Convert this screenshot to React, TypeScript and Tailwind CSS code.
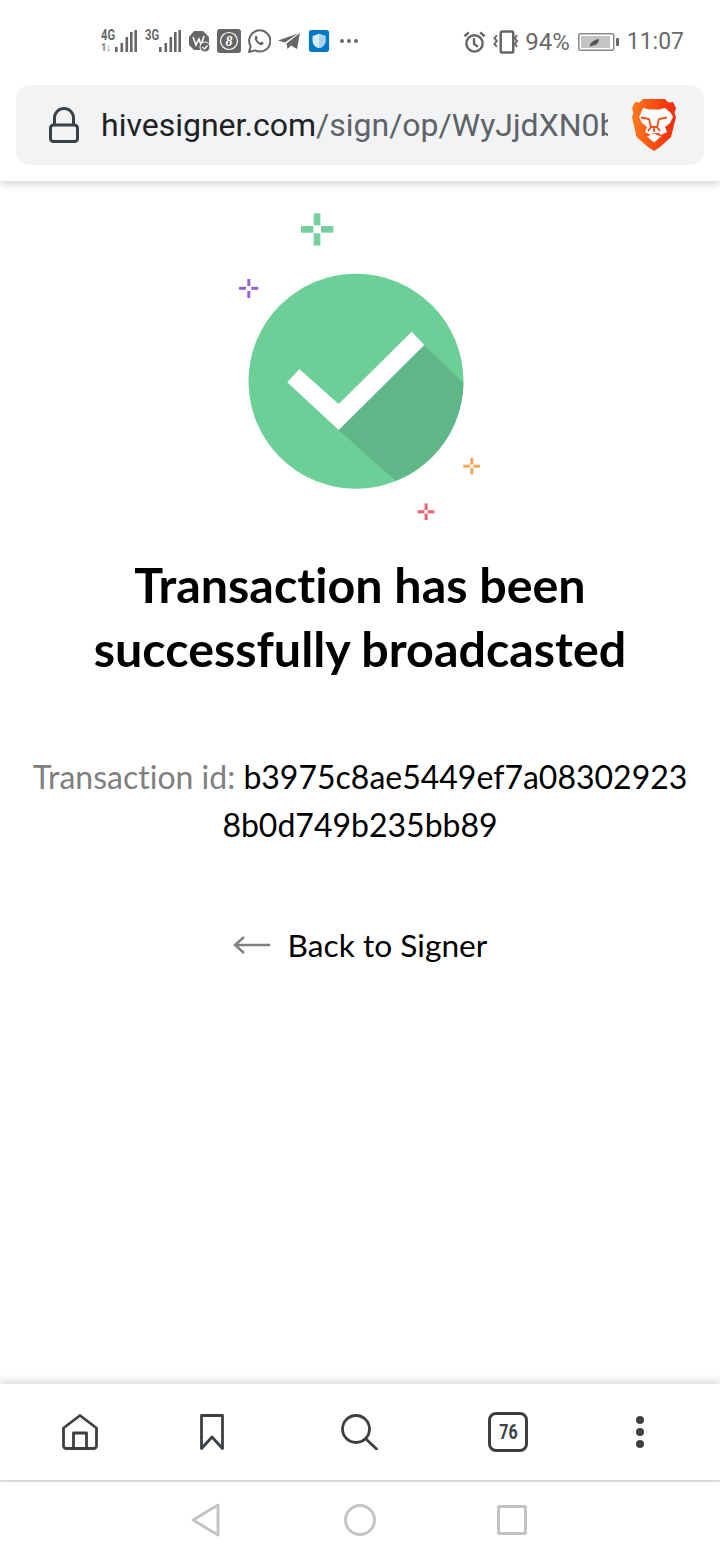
import React from "react";

const Signal = ({ label, second }: { label: string; second?: boolean }) => (
  <div className="relative h-[24px] w-[36px]">
    <span className="absolute left-0 top-[0px] origin-left scale-x-[0.8] font-['Roboto',sans-serif] text-[14px] leading-[12px] font-bold text-[#666]">
      {label}
    </span>
    {second && (
      <span className="absolute left-0 top-[13px] origin-left scale-x-[0.85] font-['Roboto',sans-serif] text-[11px] leading-[11px] font-bold text-[#777]">
        1↓
      </span>
    )}
    <svg viewBox="0 0 36 24" className="absolute inset-0 h-[24px] w-[36px]" fill="#666">
      <rect x="14" y="18" width="2.600" height="5" />
      <rect x="19.500" y="14" width="2.600" height="9" />
      <rect x="24.500" y="8" width="2.600" height="15" />
      <rect x="29" y="3" width="2.600" height="20" />
      <rect x="33.400" y="1" width="2.600" height="22" />
    </svg>
  </div>
);

const StatusBar = () => (
  <div className="flex h-[85px] items-start justify-between pl-[101px] pr-[36px] pt-[29px] font-['Roboto',sans-serif] text-[23px] leading-[24px] text-[#6a6a6a]">
    <div className="flex items-center">
      <Signal label="4G" second />
      <div className="ml-[8px]">
        <Signal label="3G" />
      </div>
      <svg viewBox="0 0 22 24" className="ml-[7px] h-[24px] w-[22px]">
        <path d="M6 2h9l6 6v8l-4 5H6l-5-5V8z" fill="#666" />
        <path d="M5 8l3 8 3-6 2 6 3-9" fill="none" stroke="#fff" strokeWidth="1.600" />
        <circle cx="17" cy="18" r="5" fill="#666" stroke="#fff" strokeWidth="1" />
        <path d="M14.500 18l2 2 3-3.500" fill="none" stroke="#fff" strokeWidth="1.300" />
      </svg>
      <div className="ml-[7px] flex h-[24px] w-[24px] items-center justify-center rounded-[3px] bg-[#666]">
        <svg viewBox="0 0 20 20" className="h-[20px] w-[20px]">
          <circle cx="10" cy="10" r="8.500" fill="none" stroke="#fff" strokeWidth="1.200" />
          <text x="10" y="15" textAnchor="middle" fontSize="14" fontStyle="italic" fontWeight="700" fontFamily="Liberation Serif, serif" fill="#fff">
            8
          </text>
        </svg>
      </div>
      <svg viewBox="0 0 24 24" className="ml-[6px] h-[24px] w-[24px]" fill="none" stroke="#666" strokeWidth="2">
        <path d="M2 23l1.700-5.600A10.600 10.600 0 1 1 8 21.400z" strokeLinejoin="round" />
        <path d="M8.500 7.500c-1.400 1.200-.9 3.300.8 5.400 1.900 2.200 4.300 3.700 6 2.900 1-.5 1.600-1.500 1.300-2l-2.300-1.200-1 1.100c-1-.3-3-2.200-3.400-3.400l.9-1.100-1-2.400c-.7-.2-1.600.1-2.300.7z" fill="#666" stroke="none" />
      </svg>
      <svg viewBox="0 0 22 16" className="ml-[7px] h-[16px] w-[22px]" fill="#666">
        <path d="M22 0l-3 16-6-3.500-3.500 3.500-1-5.500L22 0z" />
        <path d="M0 7.500L20 .5 7 9.500z" />
      </svg>
      <svg viewBox="0 0 22 24" className="ml-[8px] h-[22px] w-[22px]">
        <rect width="22" height="24" rx="3" fill="#0277c8" />
        <path d="M11 4l7 2.500V12c0 4-3 6.600-7 8-4-1.400-7-4-7-8V6.500z" fill="#d9edf9" />
        <path d="M11 4l7 2.500V12c0 4-3 6.600-7 8z" fill="#a8d3ef" />
      </svg>
      <div className="ml-[10px] flex gap-[3px]">
        <span className="h-[4px] w-[4px] rounded-full bg-[#666]" />
        <span className="h-[4px] w-[4px] rounded-full bg-[#666]" />
        <span className="h-[4px] w-[4px] rounded-full bg-[#666]" />
      </div>
    </div>
    <div className="flex items-center">
      <svg viewBox="0 0 24 24" className="h-[24px] w-[23px]" fill="none" stroke="#666" strokeWidth="2.500">
        <circle cx="12" cy="13.500" r="8.500" />
        <path d="M11.500 8v6l4 3M1.500 6l4.500-4M22.500 6l-4.500-4" />
      </svg>
      <svg viewBox="0 0 28 26" className="ml-[7px] h-[26px] w-[27px]" fill="none" stroke="#666" strokeWidth="2">
        <rect x="8" y="2" width="13" height="22" rx="2" strokeWidth="2.600" />
        <path d="M4 6L1.500 9 4 12l-2.500 3L4 18M25 6l-2.500 3 2.500 3-2.500 3 2.500 3" strokeWidth="2" />
      </svg>
      <span className="ml-[5px] text-[24px]">94%</span>
      <svg viewBox="0 0 42 22" className="ml-[8px] h-[22px] w-[42px]">
        <rect x="0.750" y="2.750" width="35" height="16.500" rx="2" fill="none" stroke="#888" strokeWidth="1.500" />
        <rect x="3" y="5" width="29" height="12" fill="#c4c4c4" />
        <path d="M12 15c0-4 5-6.500 9-7-.2 4-3 7-7 6.500l-2 1.200z" fill="#555" />
        <rect x="38" y="7" width="3" height="8" rx="1" fill="#666" />
      </svg>
      <span className="ml-[7px]">11:07</span>
    </div>
  </div>
);

const BraveLogo = () => (
  <svg viewBox="0 0 44 52" className="h-[52px] w-[44px]">
    <defs>
      <linearGradient id="brave" x1="0" x2="1" y1="0" y2="0">
        <stop offset="0" stopColor="#fb7a1e" />
        <stop offset="0.55" stopColor="#fb4a12" />
        <stop offset="1" stopColor="#f0290f" />
      </linearGradient>
    </defs>
    <path d="M11 0h22l3.500 3.500L41 3l3 6-1.500 5 1.500 4-5 20-11 10-6 4-6-4L4.500 38 0 18l1.500-4L0 9l3-6 4.500.5z" fill="url(#brave)" />
    <path d="M11 9l6 1.500h10L33 9l6 5 2 4-3 6-5 4 2 5-6 3-2-2h-6l-2 2-6-3 2-5-5-4-3-6 2-4z" fill="#fff" />
    <path d="M9 18.500l8 1.500 2 8-3 4M35 18.500l-8 1.500-2 8 3 4M19 28h6M22 28v5" fill="none" stroke="#fb4a12" strokeWidth="1.800" />
    <path d="M15 37.500l7-3 7 3-7 6z" fill="#fff" />
  </svg>
);

const AddressBar = () => (
  <header className="relative z-10 h-[181px] bg-white shadow-[0_3px_8px_rgba(0,0,0,0.18)]">
    <StatusBar />
    <div className="mx-[16px] flex h-[80px] items-center rounded-[14px] bg-[#f1f3f5] pl-[33px] pr-[28px]">
      <svg viewBox="0 0 30 36" className="h-[36px] w-[30px]" fill="none" stroke="#3c4043" strokeWidth="3">
        <rect x="1.500" y="18" width="27" height="16.500" rx="3" />
        <path d="M5.500 18v-7a9.500 9.500 0 0 1 19 0v7" />
      </svg>
      <div className="ml-[22px] w-[507px] overflow-hidden whitespace-nowrap font-['Roboto',sans-serif] text-[32px] leading-[44px] text-[#5f6368]">
        <span className="text-[#202124]">hivesigner.com</span>/sign/op/WyJjdXN0bSIsIHs
      </div>
      <div className="ml-auto">
        <BraveLogo />
      </div>
    </div>
  </header>
);

const Illustration = () => (
  <svg viewBox="230 205 260 320" className="mx-auto block h-[320px] w-[260px]">
    <circle cx="356" cy="381.300" r="107.500" fill="#6ccf98" />
    <path d="M424.300 345L463.400 383.300A107.500 107.500 0 0 1 395.700 480.700L338.700 430z" fill="#5fb788" />
    <path d="M287.300 382.300L299.300 369L338.700 404L411.700 331.700L424.300 345L338.700 430z" fill="#fff" />
    <g fill="#76cf9f">
      <rect x="313.700" y="213.300" width="6.700" height="12" />
      <rect x="313.700" y="233.300" width="6.700" height="12.300" />
      <rect x="301" y="226" width="12.300" height="6.700" />
      <rect x="321" y="226" width="12.300" height="6.700" />
    </g>
    <g fill="#9a5ed8">
      <rect x="247.300" y="279" width="3" height="7" />
      <rect x="247.300" y="291" width="3" height="7" />
      <rect x="239" y="286.800" width="7" height="3" />
      <rect x="251.300" y="286.800" width="7" height="3" />
    </g>
    <g fill="#f0a55a">
      <rect x="470.300" y="458" width="3" height="6.500" />
      <rect x="470.300" y="468" width="3" height="6.500" />
      <rect x="463.300" y="464.700" width="6.700" height="3" />
      <rect x="473.300" y="464.700" width="6.700" height="3" />
    </g>
    <g fill="#ee5f6c">
      <rect x="424.600" y="503.500" width="3" height="6.500" />
      <rect x="424.600" y="513.500" width="3" height="6.500" />
      <rect x="417.700" y="510.300" width="6.700" height="3" />
      <rect x="427.700" y="510.300" width="6.700" height="3" />
    </g>
  </svg>
);

const Toolbar = () => (
  <div className="relative z-10 grid h-[96px] grid-cols-[160px_104px_192px_104px_160px] items-center justify-items-center bg-white shadow-[0_-3px_8px_rgba(0,0,0,0.15)]">
    <svg viewBox="0 0 36 36" className="h-[36px] w-[36px]" fill="none" stroke="#3c4043" strokeWidth="2.800" strokeLinejoin="round">
      <path d="M18 1.500L34.500 14v18a3 3 0 0 1-3 2.500h-27a3 3 0 0 1-3-2.500V14z" />
      <path d="M11.500 34V19h13v15" />
    </svg>
    <svg viewBox="0 0 24 36" className="h-[36px] w-[24px]" fill="none" stroke="#3c4043" strokeWidth="2.800" strokeLinejoin="round">
      <path d="M1.500 1.500h21v33L12 23 1.500 34.500z" />
    </svg>
    <svg viewBox="0 0 38 36" className="h-[36px] w-[38px]" fill="none" stroke="#3c4043" strokeWidth="2.800" strokeLinecap="round">
      <circle cx="15" cy="15" r="13.500" />
      <path d="M25 25l10.500 10" />
    </svg>
    <div className="flex h-[40px] w-[40px] items-center justify-center rounded-[8px] border-[3px] border-[#3c4043] font-['Roboto',sans-serif] text-[20px] font-bold text-[#3c4043]">
      <span className="inline-block scale-x-[0.8]">76</span>
    </div>
    <div className="flex flex-col gap-[4px]">
      <span className="h-[8px] w-[8px] rounded-full bg-[#3c4043]" />
      <span className="h-[8px] w-[8px] rounded-full bg-[#3c4043]" />
      <span className="h-[8px] w-[8px] rounded-full bg-[#3c4043]" />
    </div>
  </div>
);

const NavBar = () => (
  <div className="flex h-[80px] items-center border-t-2 border-[#e0e0e0] bg-white pb-[2px] pl-[190px]">
    <svg viewBox="0 0 32 34" className="h-[34px] w-[32px]" fill="none" stroke="#c4c4c4" strokeWidth="3" strokeLinejoin="round">
      <path d="M28 2v30L3 17z" />
    </svg>
    <svg viewBox="0 0 32 34" className="ml-[122px] h-[34px] w-[32px]" fill="none" stroke="#c4c4c4" strokeWidth="3">
      <circle cx="16" cy="17" r="14.500" />
    </svg>
    <svg viewBox="0 0 30 30" className="ml-[121px] h-[30px] w-[30px]" fill="none" stroke="#c4c4c4" strokeWidth="3" strokeLinejoin="round">
      <rect x="1.500" y="1.500" width="27" height="27" rx="1" />
    </svg>
  </div>
);

const App: React.FC = () => {
  return (
    <div className="flex h-[1560px] w-[720px] flex-col overflow-hidden bg-white font-['Lato',sans-serif] [font-variant-ligatures:none]">
      <AddressBar />
      <main className="flex-1 pt-[24px] text-center">
        <Illustration />
        <h1 className="mt-[27px] text-[48.400px] leading-[64px] font-bold text-black">
          Transaction has been
          <br />
          successfully broadcasted
        </h1>
        <p className="mt-[73px] px-[32px] text-[32px] leading-[48px] break-all text-black">
          <span className="text-[#808080]">Transaction id: </span>
          b3975c8ae5449ef7a083029238b0d749b235bb89
        </p>
        <a className="mt-[72px] flex items-center justify-center gap-[18px] text-[31.700px] leading-[48px] text-black">
          <svg viewBox="0 0 37 20" className="h-[20px] w-[37px]" fill="none" stroke="#808080" strokeWidth="2.400">
            <path d="M37 10H2M11 2l-9 8 9 8" />
          </svg>
          Back to Signer
        </a>
      </main>
      <Toolbar />
      <NavBar />
    </div>
  );
};

export default App;
